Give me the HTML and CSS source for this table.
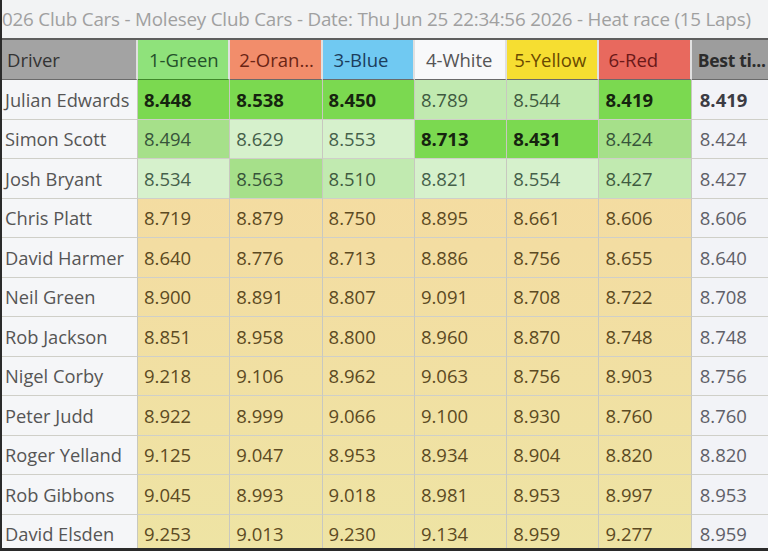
FILE: index.html
```html
<!DOCTYPE html>
<html>
<head>
<meta charset="utf-8">
<link rel="stylesheet" href="styles.css">
</head>
<body>
<div class="screen">
  <div class="title"><span class="title-text">026 Club Cars - Molesey Club Cars - Date: Thu Jun 25 22:34:56 2026 - Heat race (15 Laps)</span></div>
  <div class="grid">
    <div class="h h-driver">Driver</div>
    <div class="h h-green">1-Green</div>
    <div class="h h-orange">2-Oran...</div>
    <div class="h h-blue">3-Blue</div>
    <div class="h h-white">4-White</div>
    <div class="h h-yellow">5-Yellow</div>
    <div class="h h-red">6-Red</div>
    <div class="h h-best">Best ti...</div>

    <div class="c name">Julian Edwards</div>
    <div class="c g1 b">8.448</div>
    <div class="c g1 b">8.538</div>
    <div class="c g1 b">8.450</div>
    <div class="c g3">8.789</div>
    <div class="c g3">8.544</div>
    <div class="c g1 b">8.419</div>
    <div class="c best b">8.419</div>

    <div class="c name">Simon Scott</div>
    <div class="c g2">8.494</div>
    <div class="c g4">8.629</div>
    <div class="c g4">8.553</div>
    <div class="c g1 b">8.713</div>
    <div class="c g1 b">8.431</div>
    <div class="c g2">8.424</div>
    <div class="c best">8.424</div>

    <div class="c name">Josh Bryant</div>
    <div class="c g4">8.534</div>
    <div class="c g2">8.563</div>
    <div class="c g3">8.510</div>
    <div class="c g4">8.821</div>
    <div class="c g4">8.554</div>
    <div class="c g3">8.427</div>
    <div class="c best">8.427</div>

    <div class="c name">Chris Platt</div>
    <div class="c y">8.719</div>
    <div class="c y">8.879</div>
    <div class="c y">8.750</div>
    <div class="c y">8.895</div>
    <div class="c y">8.661</div>
    <div class="c y">8.606</div>
    <div class="c best">8.606</div>

    <div class="c name">David Harmer</div>
    <div class="c y">8.640</div>
    <div class="c y">8.776</div>
    <div class="c y">8.713</div>
    <div class="c y">8.886</div>
    <div class="c y">8.756</div>
    <div class="c y">8.655</div>
    <div class="c best">8.640</div>

    <div class="c name">Neil Green</div>
    <div class="c y">8.900</div>
    <div class="c y">8.891</div>
    <div class="c y">8.807</div>
    <div class="c y">9.091</div>
    <div class="c y">8.708</div>
    <div class="c y">8.722</div>
    <div class="c best">8.708</div>

    <div class="c name">Rob Jackson</div>
    <div class="c y">8.851</div>
    <div class="c y">8.958</div>
    <div class="c y">8.800</div>
    <div class="c y">8.960</div>
    <div class="c y">8.870</div>
    <div class="c y">8.748</div>
    <div class="c best">8.748</div>

    <div class="c name">Nigel Corby</div>
    <div class="c y">9.218</div>
    <div class="c y">9.106</div>
    <div class="c y">8.962</div>
    <div class="c y">9.063</div>
    <div class="c y">8.756</div>
    <div class="c y">8.903</div>
    <div class="c best">8.756</div>

    <div class="c name">Peter Judd</div>
    <div class="c y">8.922</div>
    <div class="c y">8.999</div>
    <div class="c y">9.066</div>
    <div class="c y">9.100</div>
    <div class="c y">8.930</div>
    <div class="c y">8.760</div>
    <div class="c best">8.760</div>

    <div class="c name">Roger Yelland</div>
    <div class="c y">9.125</div>
    <div class="c y">9.047</div>
    <div class="c y">8.953</div>
    <div class="c y">8.934</div>
    <div class="c y">8.904</div>
    <div class="c y">8.820</div>
    <div class="c best">8.820</div>

    <div class="c name">Rob Gibbons</div>
    <div class="c y">9.045</div>
    <div class="c y">8.993</div>
    <div class="c y">9.018</div>
    <div class="c y">8.981</div>
    <div class="c y">8.953</div>
    <div class="c y">8.997</div>
    <div class="c best">8.953</div>

    <div class="c name">David Elsden</div>
    <div class="c y">9.253</div>
    <div class="c y">9.013</div>
    <div class="c y">9.230</div>
    <div class="c y">9.134</div>
    <div class="c y">8.959</div>
    <div class="c y">9.277</div>
    <div class="c best">8.959</div>
  </div>
</div>
</body>
</html>
```

FILE: styles.css
```css
html, body {
  margin: 0;
  padding: 0;
  background: #2a2a2a;
}
.screen {
  width: 766px;
  height: 548px;
  margin-left: 2px;
  overflow: hidden;
  background: #f3f4f6;
  font-family: "Open Sans", "Noto Sans", sans-serif;
}
.title {
  height: 38px;
  display: flex;
  align-items: center;
  white-space: nowrap;
  overflow: hidden;
  background: #f2f3f4;
  border-bottom: 2px solid #5e5e5e;
}
.title-text {
  margin-left: 0;
  font-size: 18.8px;
  color: #a0a0a0;
  letter-spacing: -0.2px;
}
.grid {
  display: grid;
  grid-template-columns: 136px repeat(6, 92.3px) 1fr;
  grid-template-rows: 40px;
  grid-auto-rows: 39.5px;
  background: linear-gradient(180deg, #f7d99e 0%, #f3dda2 40%, #eee4a4 100%);
}
.h, .c {
  display: flex;
  align-items: center;
  padding-left: 6px;
  font-size: 18.5px;
  white-space: nowrap;
  overflow: hidden;
  box-sizing: border-box;
  border-right: 1px solid #c8c8c0;
  border-bottom: 1px solid #cfcfc8;
}
.h {
  padding-left: 11px;
  border-right: 2px solid #e0e0e0;
  border-bottom: 1px solid #6a6a6a;
}
.h-driver { background: #a3a3a3; color: #333; padding-left: 5px; }
.h-green  { background: #8fe27b; color: #24502a; border-bottom-color: #3f8a2a; }
.h-orange { background: #f28d6b; color: #6a2414; padding-left: 9px; }
.h-blue   { background: #70c9f2; color: #1b3d5c; }
.h-white  { background: #f8f9fa; color: #555; }
.h-yellow { background: #f6de31; color: #6a4a00; padding-left: 7px; }
.h-red    { background: #e8695e; color: #6a1818; padding-left: 9px; }
.h-best   { background: #9d9d9d; color: #2c2c2c; font-weight: 700; padding-left: 6px; border-right: none; font-size: 17.5px; letter-spacing: -0.3px; }

.name {
  background: #f5f6f8;
  color: #555;
  padding-left: 3px;
  font-size: 18.3px;
}
.best {
  background: #f2f3f7;
  color: #5f6068;
  border-right: none;
  padding-left: 8px;
}
.b { font-weight: 700; color: #1b2a17; }
.best.b { color: #3c3c44; }
.g1 { background: #7bd950; color: #1b2a17; }
.g2 { background: #a6e08a; color: #37543a; }
.g3 { background: #c1eab0; color: #3f5a40; }
.g4 { background: #d6f1cc; color: #45604a; }
.g1.b { color: #16240f; }
.y { background: transparent; color: #5c4a22; }
```
